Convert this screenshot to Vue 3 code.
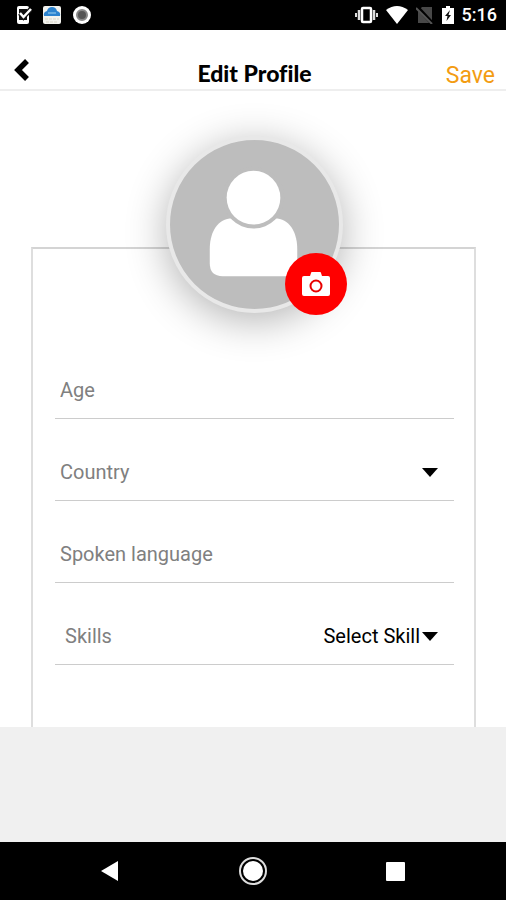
<script setup>
import { ref } from 'vue'

const age = ref('')
const country = ref('')
const language = ref('')
const skill = ref('')
</script>

<template>
  <div class="screen">
    <div class="status">
      <div class="status-group left">
        <svg width="18" height="20" viewBox="0 0 18 20" aria-hidden="true">
          <rect x="3" y="1" width="12" height="18" rx="2" fill="#fff" />
          <rect x="5" y="4" width="8" height="11" fill="#111" />
          <path d="M6 8l3.500 4L17 4" fill="none" stroke="#111" stroke-width="5" />
          <path d="M6 8l3.500 4L17 4" fill="none" stroke="#fff" stroke-width="2.500" />
        </svg>
        <svg width="18" height="18" viewBox="0 0 18 18" aria-hidden="true">
          <rect width="18" height="18" rx="2" fill="#f3f3ee" />
          <path d="M1 10q-1-4 3-5 1-4 5-4t5 4q4 1 3 5z" fill="#2c83cf" />
          <path d="M5 7h8" stroke="#65abe0" stroke-width="2" />
          <path d="M2 13h14M3 16h12" stroke="#d8d5c6" stroke-dasharray="3 1" />
        </svg>
        <svg width="20" height="20" viewBox="0 0 20 20" aria-hidden="true">
          <circle cx="10" cy="10" r="9" fill="#fff" />
          <circle cx="10" cy="10" r="5" fill="#555" stroke="#888" stroke-width="2" />
        </svg>
      </div>
      <div class="status-group right">
        <svg width="24" height="18" viewBox="0 0 24 18" aria-hidden="true">
          <rect x="8" y="2" width="9" height="14" rx="1" fill="none" stroke="#fff" stroke-width="2.500" />
          <path d="M5 4v10M20 4v10" stroke="#ddd" stroke-width="2.500" />
          <path d="M2 7v4M23 7v4" stroke="#ddd" stroke-width="2" />
        </svg>
        <svg width="22" height="18" viewBox="0 0 22 18" aria-hidden="true">
          <path d="M0 4Q11-4 22 4L11 18z" fill="#fff" />
        </svg>
        <svg width="18" height="18" viewBox="0 0 18 18" aria-hidden="true">
          <path d="M6 1h10v16H2V5z" fill="#484848" />
          <path d="M1 1l16 17" stroke="#000" stroke-width="4" />
          <path d="M0 2l16 16" stroke="#555" stroke-width="2" />
        </svg>
        <svg width="12" height="18" viewBox="0 0 12 18" aria-hidden="true">
          <path d="M4 0h4v2h4v16H0V2h4z" fill="#fff" />
          <path d="M8 4L3 10h2.500L4.500 15 9 9H6.500z" fill="#111" />
        </svg>
        <span class="time">5:16</span>
      </div>
    </div>

    <header class="header">
      <button class="back" type="button" aria-label="Back">
        <svg width="16" height="24" viewBox="0 0 16 24" aria-hidden="true">
          <path d="M13 3L4 12l9 9" fill="none" stroke="#000" stroke-width="5.500" />
        </svg>
      </button>
      <h1 class="title">Edit Profile</h1>
      <button class="save" type="button">Save</button>
    </header>

    <main class="content">
      <form class="card" @submit.prevent>
        <div class="avatar">
          <svg class="person" viewBox="0 0 170 170" aria-hidden="true">
            <path d="M60 79C46 81 40 95 40 110V124Q40 137 53 137H115Q128 137 128 124V110C128 95 122 81 108 79Z" fill="#fff" />
            <circle cx="84" cy="58" r="31" fill="#bdbdbd" />
            <circle cx="84" cy="58" r="27" fill="#fff" />
          </svg>
          <button class="camera" type="button" aria-label="Change photo">
            <svg width="28" height="24" viewBox="0 0 28 24" aria-hidden="true">
              <path d="M2 4h6l1-3q0-1 1-1h8q1 0 1 1l1 3h6q2 0 2 2v16q0 2-2 2H2q-2 0-2-2V6q0-2 2-2z" fill="#fff" />
              <circle cx="14" cy="14" r="5.500" fill="#fff" stroke="#e80000" stroke-width="2" />
            </svg>
          </button>
        </div>

        <div class="field">
          <input v-model="age" class="control" type="text" placeholder="Age" aria-label="Age" />
        </div>
        <div class="field">
          <select v-model="country" class="control hint" aria-label="Country">
            <option value="">Country</option>
          </select>
          <svg class="caret" width="16" height="9" viewBox="0 0 16 9" aria-hidden="true"><path d="M0 0h16L8 9z" /></svg>
        </div>
        <div class="field">
          <input v-model="language" class="control" type="text" placeholder="Spoken language" aria-label="Spoken language" />
        </div>
        <div class="field skills">
          <label class="label" for="skill">Skills</label>
          <select id="skill" v-model="skill" class="control choice">
            <option value="">Select Skill</option>
          </select>
          <svg class="caret" width="16" height="9" viewBox="0 0 16 9" aria-hidden="true"><path d="M0 0h16L8 9z" /></svg>
        </div>
      </form>
    </main>

    <nav class="nav" aria-label="System">
      <button type="button" aria-label="Back">
        <svg width="28" height="28" viewBox="0 0 28 28"><path d="M5 14L22 4v20z" fill="#fff" /></svg>
      </button>
      <button type="button" aria-label="Home">
        <svg width="28" height="28" viewBox="0 0 28 28">
          <circle cx="14" cy="14" r="13" fill="none" stroke="#ddd" stroke-width="2" />
          <circle cx="14" cy="14" r="10" fill="#fff" />
        </svg>
      </button>
      <button type="button" aria-label="Recent apps">
        <svg width="28" height="28" viewBox="0 0 28 28"><rect x="4" y="5" width="19" height="19" rx="1" fill="#fff" /></svg>
      </button>
    </nav>
  </div>
</template>

<style>
body {
  margin: 0;
}
</style>

<style scoped>
* {
  box-sizing: border-box;
}
svg {
  display: block;
}
button {
  margin: 0;
  padding: 0;
  border: 0;
  background: none;
  font: inherit;
  cursor: pointer;
}
.screen {
  display: flex;
  flex-direction: column;
  min-height: 100vh;
  background: #f0f0f0;
  font-family: Roboto, sans-serif;
  font-size: 20px;
}
.status {
  display: flex;
  justify-content: space-between;
  align-items: center;
  height: 30px;
  padding: 0 9px 0 14px;
  background: #000;
  color: #fff;
}
.status-group {
  display: flex;
  align-items: center;
}
.left {
  gap: 11px;
}
.right {
  gap: 8px;
}
.time {
  font-size: 18px;
  font-weight: 500;
  line-height: 30px;
}
.header {
  display: grid;
  grid-template-columns: 1fr auto 1fr;
  align-items: end;
  height: 61px;
  padding: 0 11px 0 14px;
  border-bottom: 2px solid #eee;
  background: #fff;
}
.back {
  justify-self: start;
  padding-bottom: 7px;
}
.title {
  margin: 0;
  font-family: Lato, sans-serif;
  font-size: 23px;
  font-variant-ligatures: none;
  font-weight: 900;
  line-height: 32px;
}
.save {
  justify-self: end;
  color: #f39c12;
  font-size: 23px;
  line-height: 27px;
}
.content {
  padding: 156px 30px 0 31px;
  background: #fff;
}
.card {
  display: flex;
  flex-direction: column;
  padding: 0 20px 62px 22px;
  border: 2px solid #dedede;
  border-top-color: #d4d4d4;
  border-bottom: 0;
}
.avatar {
  position: relative;
  align-self: center;
  width: 177px;
  height: 177px;
  margin: -113px 0 24px;
  border: 4px solid #e8e8e8;
  border-radius: 50%;
  background: #bdbdbd;
  box-shadow: 0 8px 40px rgba(0, 0, 0, 0.3);
}
.person {
  width: 100%;
}
.camera {
  position: absolute;
  right: -8px;
  bottom: -6px;
  display: grid;
  place-items: center;
  width: 62px;
  height: 62px;
  border-radius: 50%;
  background: #f00;
}
.field {
  display: flex;
  align-items: center;
  height: 82px;
  padding: 26px 16px 0 5px;
  border-bottom: 1px solid #ccc;
}
.skills {
  padding-left: 10px;
}
.control {
  flex: 1;
  min-width: 0;
  height: 40px;
  padding: 0 0 2px;
  border: 0;
  outline: 0;
  background: none;
  color: #000;
  font: inherit;
  appearance: none;
}
.control::placeholder {
  color: #808080;
  opacity: 1;
}
.hint,
.label {
  color: #808080;
}
.label {
  padding-bottom: 2px;
}
.choice {
  padding-right: 2px;
  text-align: right;
  text-align-last: right;
}
.caret {
  flex: none;
}
.nav {
  display: flex;
  justify-content: space-around;
  align-items: center;
  height: 58px;
  margin-top: auto;
  padding: 0 38px;
  background: #000;
}
</style>
